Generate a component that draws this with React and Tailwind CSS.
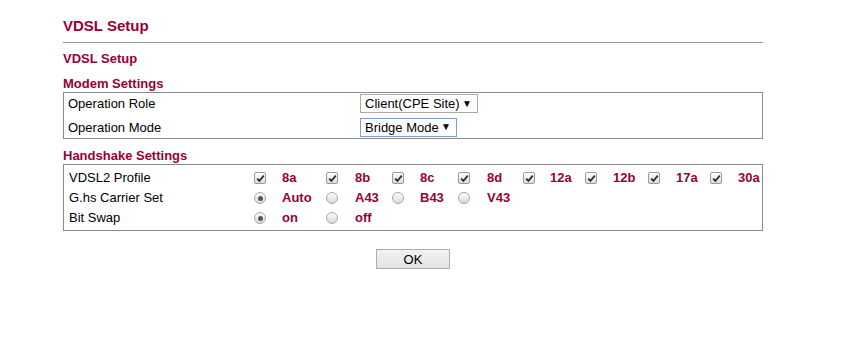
import React from "react";

const maroon = "text-[#990033]";

function Check() {
  return (
    <span className="inline-flex w-[12px] h-[12px] items-center justify-center rounded-[2px] border border-[#9a9a9a] bg-gradient-to-b from-[#ffffff] to-[#dcdcdc]">
      <svg width="9" height="9" viewBox="0 0 9 9">
        <path d="M1.2 4.6 L3.4 6.9 L7.8 1.6" fill="none" stroke="#2b2b2b" strokeWidth="1.7" />
      </svg>
    </span>
  );
}

function Radio({ on }) {
  return (
    <span className="inline-flex w-[12px] h-[12px] items-center justify-center rounded-full border border-[#a8a8a8] bg-gradient-to-b from-[#ffffff] to-[#d8d8d8]">
      {on ? <span className="w-[5px] h-[5px] rounded-full bg-[#555555]" /> : null}
    </span>
  );
}

function Sel({ text, w, focus }) {
  return (
    <div
      className={
        "flex items-center justify-between h-[19px] bg-white pl-[4px] pr-[5px] text-[13px] text-black " +
        (focus ? "border border-[#7aa0d4]" : "border border-[#a9a9a9]") +
        " " +
        w
      }
    >
      <span>{text}</span>
      <span className="text-[10px] leading-none">▼</span>
    </div>
  );
}

const cols = "grid grid-cols-[185px_28px_44px_29px_37px_28px_38px_29px_36px_27px_35px_28px_35px_28px_34px_28px_1fr] items-center";

export default function App() {
  const profiles = ["8a", "8b", "8c", "8d", "12a", "12b", "17a", "30a"];
  return (
    <div className="w-[860px] h-[349px] bg-white font-['Liberation_Sans',Arial,sans-serif]">
      <div className="ml-[63px] w-[700px] pt-[17px]">
        <div className={"text-[15px] leading-[18px] font-bold " + maroon}>VDSL Setup</div>
        <div className="mt-[7px] h-px bg-[#9a9a9a]" />
        <div className={"mt-[8px] text-[13px] leading-[16px] font-bold " + maroon}>VDSL Setup</div>
        <div className={"mt-[9px] text-[13px] leading-[16px] font-bold " + maroon}>Modem Settings</div>
        <div className="h-[47px] border border-[#8a8a8a] flex flex-col justify-center gap-[4px] text-[13px] text-black">
          <div className="grid grid-cols-[292px_1fr] items-center pl-[4px]">
            <span>Operation Role</span>
            <Sel text="Client(CPE Site)" w="w-[118px]" />
          </div>
          <div className="grid grid-cols-[292px_1fr] items-center pl-[4px]">
            <span>Operation Mode</span>
            <Sel text="Bridge Mode" w="w-[97px]" focus />
          </div>
        </div>
        <div className={"mt-[9px] text-[13px] leading-[16px] font-bold " + maroon}>Handshake Settings</div>
        <div className="h-[67px] border border-[#8a8a8a] pt-[3px] text-[13px] text-black">
          <div className={cols + " h-[20px] pl-[5px]"}>
            <span>VDSL2 Profile</span>
            {profiles.map((p) => (
              <React.Fragment key={p}>
                <Check />
                <span className={"font-bold " + maroon}>{p}</span>
              </React.Fragment>
            ))}
          </div>
          <div className={cols + " h-[20px] pl-[5px]"}>
            <span>G.hs Carrier Set</span>
            <Radio on />
            <span className={"font-bold " + maroon}>Auto</span>
            <Radio />
            <span className={"font-bold " + maroon}>A43</span>
            <Radio />
            <span className={"font-bold " + maroon}>B43</span>
            <Radio />
            <span className={"font-bold " + maroon}>V43</span>
          </div>
          <div className={cols + " h-[20px] pl-[5px]"}>
            <span>Bit Swap</span>
            <Radio on />
            <span className={"font-bold " + maroon}>on</span>
            <Radio />
            <span className={"font-bold " + maroon}>off</span>
          </div>
        </div>
        <div className="flex justify-center mt-[18px]">
          <button className="w-[74px] h-[20px] border border-[#adadad] bg-gradient-to-b from-[#f2f2f2] to-[#e2e2e2] text-[13px] text-black leading-none">
            OK
          </button>
        </div>
      </div>
    </div>
  );
}
